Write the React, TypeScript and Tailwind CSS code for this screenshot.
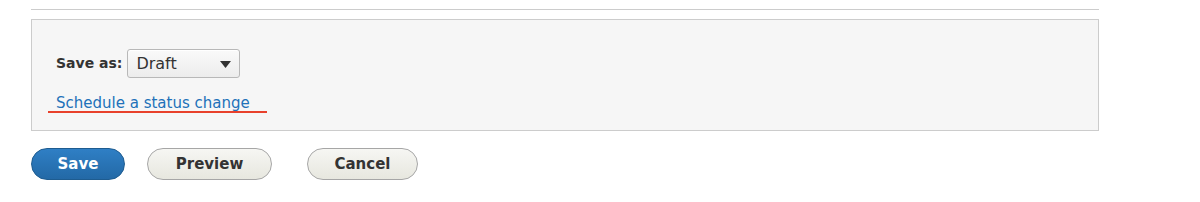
import React, { useState } from "react";

const font = { fontFamily: '"DejaVu Sans", "Liberation Sans", sans-serif' };

const App: React.FC = () => {
  const [status, setStatus] = useState("Draft");

  return (
    <div className="w-[1200px] h-[202px] bg-white text-[#333]" style={font}>
      <div className="ml-[31px] w-[1068px] pt-[9px]">
        <hr className="border-0 border-t border-[#cccccc]" />

        <div className="mt-[9px] h-[112px] border border-[#cccccc] bg-[#f6f6f6] pl-[24px] pt-[29px]">
          <div className="flex items-center h-[29px]">
            <label className="text-[14px] font-bold text-[#333] mr-[5px]">Save as:</label>
            <div className="relative">
              <select
                value={status}
                onChange={(e) => setStatus(e.target.value)}
                className="appearance-none w-[113px] h-[29px] rounded-[3px] border border-[#b8b8b8] bg-gradient-to-b from-[#fafafa] to-[#ececec] pl-[8px] text-[16px] text-[#333] shadow-[inset_0_1px_0_#fff]"
              >
                <option>Draft</option>
                <option>Published</option>
              </select>
              <svg
                className="pointer-events-none absolute right-[9px] top-[12px]"
                width="11"
                height="7"
                viewBox="0 0 11 7"
              >
                <path d="M0 0h11L5.5 7z" fill="#333" />
              </svg>
            </div>
          </div>

          <div className="mt-[16px] inline-block">
            <a href="#" className="block text-[15px] leading-[18px] text-[#2171b9] no-underline">
              Schedule a status change
            </a>
            <div className="-ml-[8px] -mt-[1px] h-[2px] w-[219px] bg-[#e8412c]" />
          </div>
        </div>

        <div className="mt-[17px] flex items-center">
          <button className="h-[32px] w-[94px] rounded-full border border-[#1e5c90] bg-gradient-to-b from-[#2f7fc5] to-[#2369a6] text-[15px] font-bold text-white">
            Save
          </button>
          <button className="ml-[22px] h-[32px] w-[125px] rounded-full border border-[#a6a6a6] bg-gradient-to-b from-[#f6f6f3] to-[#e7e7df] text-[15px] font-bold text-[#333]">
            Preview
          </button>
          <button className="ml-[35px] h-[32px] w-[111px] rounded-full border border-[#a6a6a6] bg-gradient-to-b from-[#f6f6f3] to-[#e7e7df] text-[15px] font-bold text-[#333]">
            Cancel
          </button>
        </div>
      </div>
    </div>
  );
};

export default App;
